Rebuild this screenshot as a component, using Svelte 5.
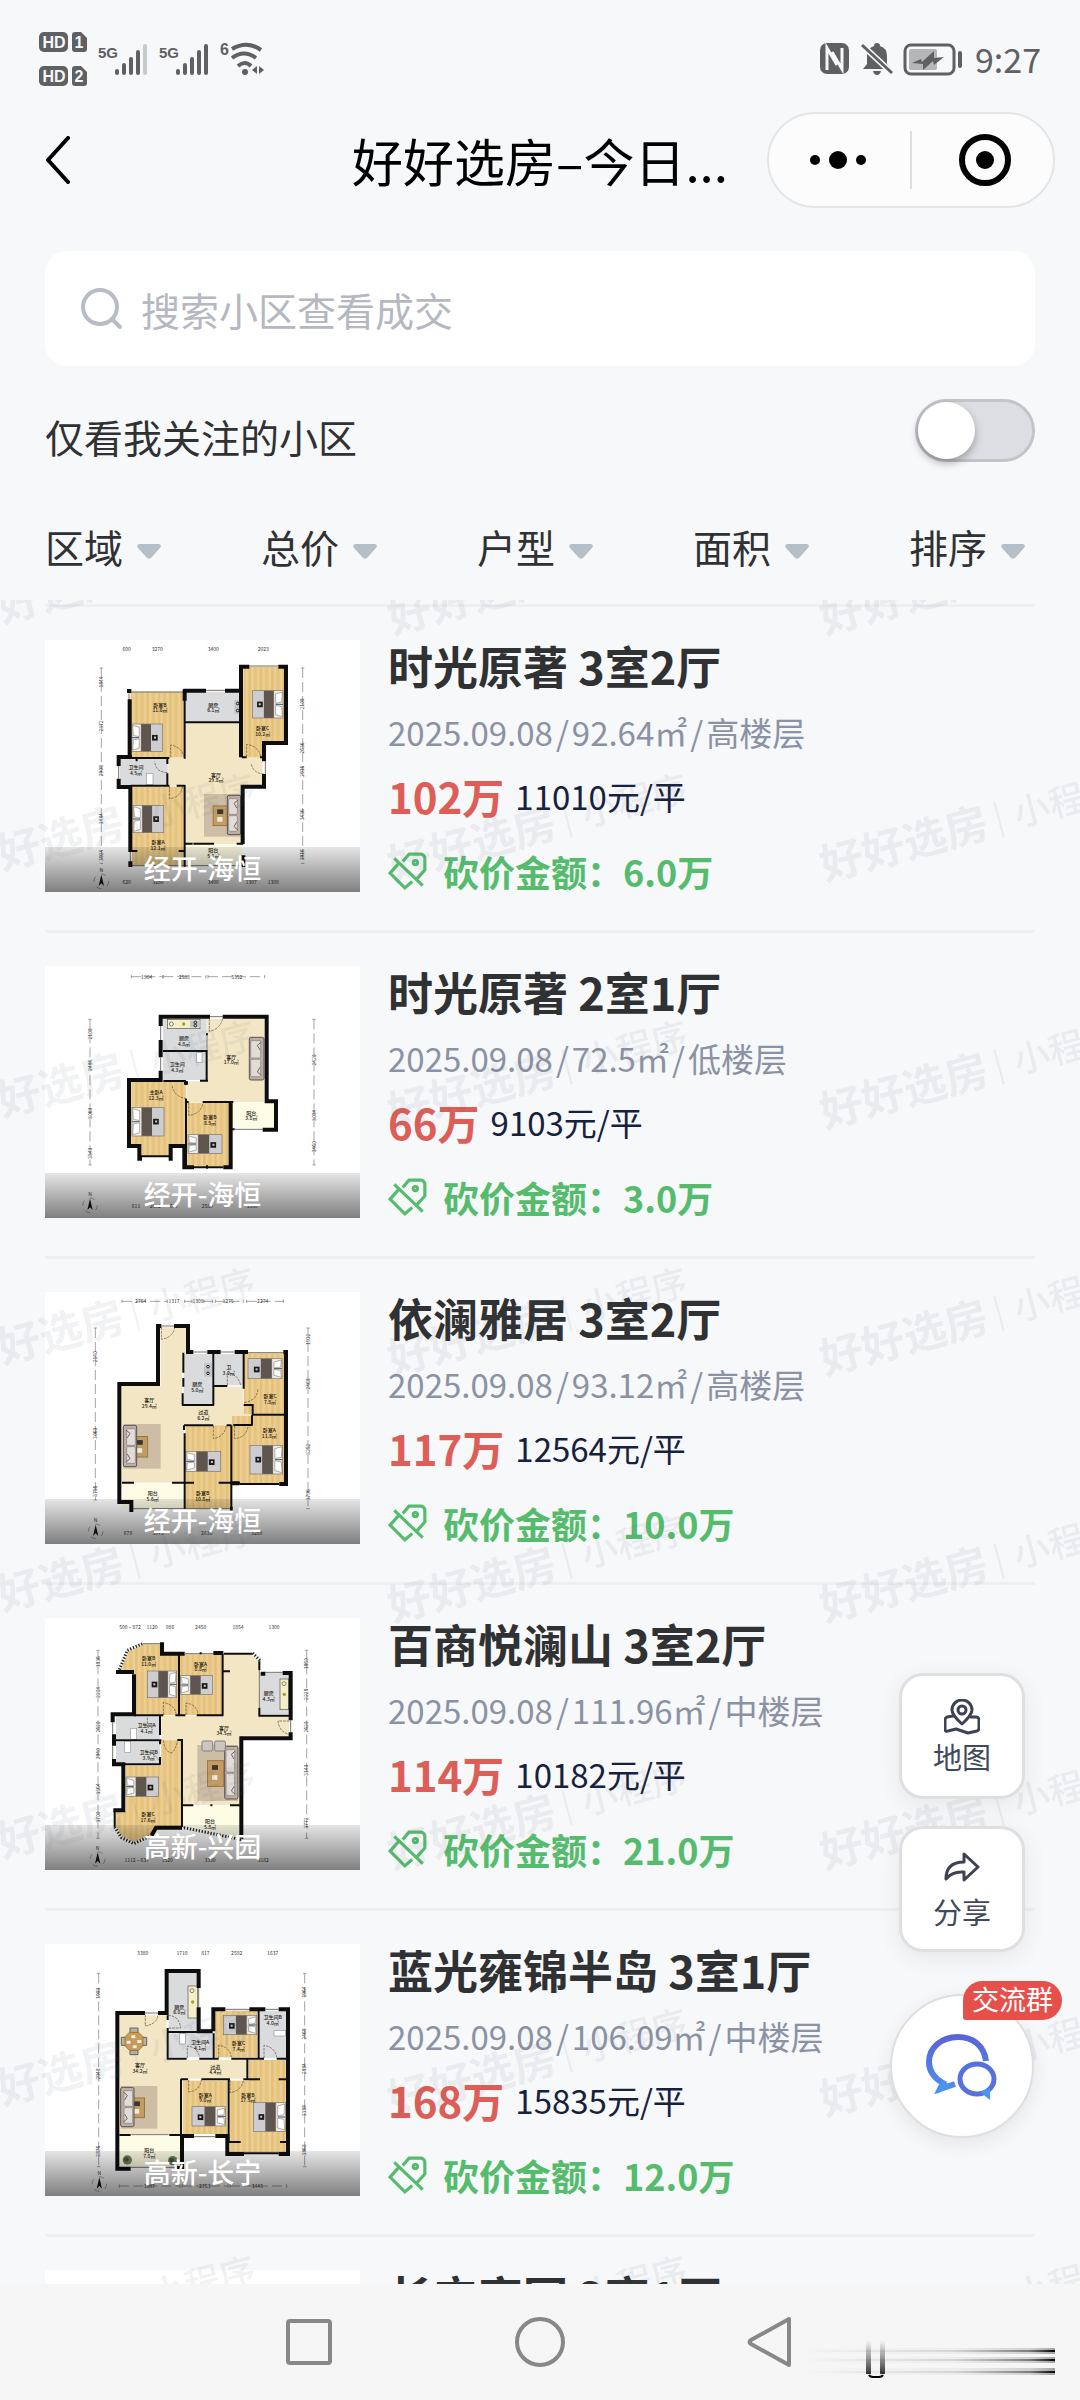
<script>
  const filters = ['区域', '总价', '户型', '面积', '排序'];

  const plans = {
    a: {
      box: '45 60 945 756',
      wood: ['M302 215H463V412H302Z', 'M306 500H463V737H306Z', 'M640 140H765V368H700V412H640Z'],
      cream: ['M467 308H635V412H698V497H635V672H467V497H415V412H467Z'],
      tile: ['M467 215H635V306H467Z', 'M270 416H413V496H270Z'],
      pale: ['M467 675H635V738H467Z'],
      thick: 'M291 213H304M299 238V412M266 438V411H306M266 476V501H306M301 500V696M301 724V741M633 412V140H658M745 140H768V369H702V424M702 462V500H638V672M640 706V741M460 212H528M585 212H638M464 208V242',
      thin: 'M464 212V416M464 496V740M302 414H418M302 497H418M440 497H466M466 307H550M550 307H636M635 215V412M412 416V432M412 460V497M466 671H488M620 671H640M636 412H650M690 412H704M304 693H322M446 693H464M490 671H552M320 415V424',
      glass: 'M304 216H460M528 211H585M658 138H745M304 737H636M297 220V240M266 438V476M706 424V462M301 696V724',
      doors: 'M422 412V375Q452 380 462 408M418 498V536Q450 534 458 500M412 458Q376 456 374 424M650 410V373Q684 378 692 408M702 462Q668 460 664 430',
      beds: [[306, 312, 91, 82, 0], [309, 556, 92, 82, 0], [667, 212, 92, 82, 1]],
      rugs: [[522, 522, 110, 128, 1]],
      stove: [[613, 240, 20, 42]],
      bath: [[349, 460, 20, 34]],
      labels: [[390, 260, '卧室B', '11.6㎡'], [550, 260, '厨房', '6.1㎡'], [698, 330, '卧室C', '10.2㎡'], [318, 448, '卫生间', '4.5㎡'], [558, 470, '客厅', '29.8㎡'], [384, 672, '卧室A', '12.1㎡'], [550, 696, '阳台', '5.1㎡']],
      top: [88, [[290, '600'], [382, '3270'], [550, '3400'], [700, '2023']]],
      bottom: [787, [[290, '620'], [384, '3280'], [550, '3400'], [664, '1307'], [730, '1308']]],
      left: [214, 144, 730, [186, 318, 452, 596, 706]],
      right: [818, 144, 730, [252, 384, 454, 584, 704]],
      compass: [214, 784]
    },
    b: {
      box: '45 48 945 756',
      wood: ['M304 396H468V584H418V618H334V584H304Z', 'M472 458H597V648H472Z'],
      cream: ['M532 206H703V456H470V394H532Z'],
      tile: ['M399 206H530V300H399Z', 'M399 306H530V390H399Z'],
      pale: ['M604 458H732V534H604Z'],
      thick: 'M392 228V200H540M578 200H710V454H738V539H698M392 270V322M392 362V390H297V588H328V626H336M428 626H422V588H466M463 588V652H492M580 652H602V456M468 394V404',
      thin: 'M399 303H532M530 300V392M510 392H534M531 250V256M400 393H468M468 394V404M468 446V650M470 456H476M518 456H610M602 538H614M332 619H420M490 652H580M531 646V656',
      glass: 'M392 228V270M392 322V362M540 200H578M614 538H698M531 256V300',
      doors: 'M538 206V244Q570 238 578 206M470 446Q430 440 426 404M476 458V496Q514 492 518 460',
      beds: [[306, 472, 96, 86, 0], [474, 554, 102, 56, 0]],
      sofas: [[658, 262, 44, 128, 1]],
      stove: [[480, 212, 32, 20]],
      counter: [[412, 208, 98, 28]],
      bath: [[500, 308, 16, 30]],
      labels: [[462, 270, '厨房', '4.8㎡'], [442, 348, '卫生间', '4.3㎡'], [604, 326, '客厅', '17.0㎡'], [378, 432, '主卧A', '12.3㎡'], [540, 508, '卧室B', '8.5㎡'], [664, 494, '阳台', '3.8㎡']],
      top: [80, [[350, '1904'], [463, '2588'], [620, '3352']], [[304, 398], [400, 528], [534, 704]]],
      bottom: [768, [[318, '611'], [376, '2092'], [432, '607'], [532, '2580'], [666, '3350']]],
      left: [180, 208, 645, [252, 346, 490, 610]],
      right: [852, 208, 645, [330, 496, 590]],
      compass: [180, 766]
    },
    c: {
      box: '45 66 945 756',
      wood: ['M642 250H764V432H642Z', 'M606 438H764V640H606Z', 'M467 466H602V716H467Z'],
      cream: ['M392 172H468V250H456V406H550V350H640V406H664V464H462V638H274V348H392Z'],
      tile: ['M461 252H548V402H461Z', 'M554 252H640V346H554Z'],
      pale: ['M276 642H460V716H276Z'],
      thick: 'M394 168H384V342H268V696H304V726M432 168H474V246H490M532 246H572M614 246H654M760 246H768V642H748M628 640H602M600 716H608',
      thin: 'M460 248V308M460 324V350M458 370V406M550 250V406M456 405H552M550 348H592M641 250V356M641 405H668V436M668 434H766M666 436V464M610 465H668M462 466H548M590 466H604M604 466V716M462 466V480M464 490V716M276 638H312M426 638H492M566 638H630M628 642H748M546 466H550',
      glass: 'M490 246H532M572 246H614M654 248H760M304 716H600M394 168H432M628 642H748',
      doors: 'M394 172V208Q430 202 434 172M592 346V308Q624 312 632 346M642 398Q680 392 684 358M550 468V506Q584 500 588 468M614 468V506Q650 502 654 468',
      beds: [[654, 266, 102, 60, 1], [468, 544, 104, 60, 0], [660, 526, 98, 86, 1]],
      rugs: [[280, 462, 112, 134, 0]],
      stove: [[522, 280, 24, 40]],
      labels: [[358, 396, '客厅', '29.4㎡'], [502, 348, '厨房', '5.0㎡'], [596, 298, '卫', '3.2㎡'], [720, 384, '卧室C', '7.8㎡'], [520, 432, '过道', '6.2㎡'], [718, 486, '卧室A', '11.8㎡'], [518, 676, '卧室B', '10.8㎡'], [368, 676, '阳台', '5.6㎡']],
      top: [94, [[332, '2764'], [432, '1317'], [504, '1309'], [594, '1275'], [698, '2274']], [[276, 412], [464, 486], [522, 548], [556, 640], [650, 760]]],
      bottom: [790, [[294, '670'], [384, '3975'], [530, '2610'], [680, '3280']]],
      left: [196, 174, 690, [260, 490, 664]],
      right: [834, 174, 716, [208, 342, 538, 674]],
      compass: [197, 784]
    },
    d: {
      box: '45 53 945 756',
      wood: ['M338 132H396V160H446V344H312V212H268L292 150Z', 'M450 162H576V344H450Z', 'M394 420H454V678H380L366 706L312 728L270 708L256 676V632H288V496H394Z'],
      cream: ['M582 162H668L688 182V346H778V406H634V614H458V420H394V346H582Z'],
      tile: ['M690 218H776V342H690Z', 'M258 348H390V416H258Z', 'M258 424H390V490H258Z'],
      pale: ['M458 618H630V718L458 678Z'],
      thick: 'M396 126V160H464M312 222V342H248V366M258 215H312M550 158H580M692 220H706M758 218H782V360M782 396V414H634V716M252 402V436M252 476V492H280V630H250M364 706L378 682H456',
      thin: 'M447 162V346M578 160V346M580 213H600M312 345H400M436 345H466M500 345H580M582 160H668M688 180V210M688 322V346H780M252 420H394M390 346V404M390 420V432M390 470V492M256 492H392M442 419H456V680M458 615H490M544 612V618M600 615H634M254 632V680M634 412H640M512 156V162',
      glass: 'M338 130H396M464 160H550M248 366V402M248 436V476M706 216H758M782 360V396M688 210V322M458 680L636 720',
      doors: 'M400 344V306Q434 314 438 340M468 344V308Q500 312 504 342M400 420Q404 456 426 458Q440 440 442 422M778 362H744Q748 396 778 402M352 352V380M346 454Q376 456 390 486',
      hatch: 'M268 208L292 150L338 130M254 680L274 712L312 730L364 706M668 158L690 180M462 682L634 718',
      beds: [[352, 212, 88, 80, 1], [452, 226, 96, 56, 0], [288, 530, 98, 58, 0]],
      rugs: [[502, 434, 122, 168, 1]],
      counter: [[750, 236, 26, 92]],
      bath: [[302, 384, 18, 34], [284, 422, 18, 34]],
      chairs: [[516, 422, 32, 30], [554, 422, 32, 30]],
      labels: [[356, 180, '卧室B', '11.0㎡'], [512, 196, '卧室A', '8.8㎡'], [716, 284, '厨房', '4.3㎡'], [350, 380, '卫生间A', '4.1㎡'], [356, 462, '卫生间B', '3.9㎡'], [582, 388, '客厅', '34.5㎡'], [354, 648, '卧室C', '17.6㎡'], [540, 668, '阳台', '5.8㎡']],
      top: [80, [[300, '500·872'], [366, '1120'], [420, '986'], [512, '2450'], [624, '1854'], [732, '1300']]],
      bottom: [778, [[320, '1112·637'], [412, '1520'], [540, '3330'], [700, '3182']]],
      left: [204, 150, 714, [184, 276, 380, 460, 566, 650]],
      right: [830, 150, 714, [190, 282, 380, 510, 668]],
      compass: [203, 776]
    },
    e: {
      box: '45 72 945 756',
      wood: ['M556 272H682V412H556Z', 'M458 482H592V642H458Z', 'M656 420H768V696H600V482H656Z'],
      cream: ['M268 286H410V420H648V476H450V642H268Z'],
      tile: ['M416 158H502V332H416Z', 'M416 340H548V412H416Z', 'M690 272H768V414H690Z'],
      pale: ['M268 648H450V740H268Z'],
      thick: 'M345 279H262V746H302M384 279H410V153H506V204M506 262V334H548M550 334V268H586M658 268H706M746 268H774V702H746M642 702H592V648H556M492 648H456V744H440',
      thin: 'M413 286V300M413 324V416H470M414 336H512M508 416H566M604 416H702M740 416H770M551 340V416M686 272V414M652 418V478M452 478H474M514 478H600M640 478H690M746 478H770M453 478V644M596 480V666H632M750 666H770M268 645H302M418 645H456M642 700H746',
      glass: 'M345 279H384M506 204V262M512 330H548M586 268H658M706 268H746M302 742H440M492 650H556M304 644H416',
      doors: 'M346 284V318Q380 312 384 286M414 286Q448 288 452 324H414M472 414V378Q504 382 508 412M566 414V376Q600 380 604 412M702 414V376Q736 382 740 412M476 480V516Q510 512 514 480M600 480V518Q636 512 640 480',
      beds: [[580, 286, 100, 58, 1], [486, 560, 100, 58, 1], [670, 548, 96, 86, 1]],
      rugs: [[272, 498, 110, 128, 0]],
      counter: [[474, 198, 28, 96]],
      bath: [[448, 340, 18, 32], [732, 332, 34, 16]],
      table: [312, 364],
      plants: [[292, 720], [428, 722]],
      labels: [[448, 266, '厨房', '6.0㎡'], [510, 372, '卫生间A', '4.1㎡'], [626, 376, '卧室C', '7.4㎡'], [728, 298, '卫生间B', '4.0㎡'], [330, 442, '客厅', '34.2㎡'], [556, 446, '过道', '4.4㎡'], [526, 530, '卧室A', '9.0㎡'], [654, 530, '卧室B', '17.5㎡'], [358, 696, '阳台', '7.0㎡']],
      top: [100, [[338, '3380'], [456, '1710'], [526, '817'], [620, '2592'], [728, '1637']]],
      bottom: [798, [[358, '3907'], [524, '2753'], [682, '3443']], [[268, 450], [456, 594], [600, 770]]],
      left: [206, 160, 740, [220, 462, 694]],
      right: [824, 160, 740, [216, 342, 446, 572, 690]],
      compass: [208, 792]
    },
    f: {
      box: '0 0 945 756',
      wood: [], cream: [], tile: [], pale: [], thick: '', thin: '', glass: '', doors: '', beds: [], labels: [],
      top: [50, [[350, '1300'], [430, '2700'], [560, '1600']], [[340, 420], [450, 610]]],
      bottom: [730, []],
      left: [150, 120, 680, []],
      right: [790, 120, 680, []]
    }
  };

  const listings = [
    { plan: 'a', place: '经开-海恒', name: '时光原著 3室2厅', area: '92.64', floor: '高楼层', total: '102万', unit: '11010元/平', cut: '6.0万' },
    { plan: 'b', place: '经开-海恒', name: '时光原著 2室1厅', area: '72.5', floor: '低楼层', total: '66万', unit: '9103元/平', cut: '3.0万' },
    { plan: 'c', place: '经开-海恒', name: '依澜雅居 3室2厅', area: '93.12', floor: '高楼层', total: '117万', unit: '12564元/平', cut: '10.0万' },
    { plan: 'd', place: '高新-兴园', name: '百商悦澜山 3室2厅', area: '111.96', floor: '中楼层', total: '114万', unit: '10182元/平', cut: '21.0万' },
    { plan: 'e', place: '高新-长宁', name: '蓝光雍锦半岛 3室1厅', area: '106.09', floor: '中楼层', total: '168万', unit: '15835元/平', cut: '12.0万' },
    { plan: 'f', place: '', name: '长宁家园 2室1厅' }
  ];
</script>

{#snippet signal(weak)}
  <svg class="signal" viewBox="0 0 50 34" aria-hidden="true">
    <text x="0" y="16" font-size="15" font-weight="700">5G</text>
    <path d="M19 29v2M26 23v8M33 17v14M40 10v21" />
    <path d="M47 4v27" opacity={weak ? 0.3 : 1} />
  </svg>
{/snippet}

{#snippet bed(x, y, w, h, flip)}
  <g transform={flip ? `translate(${x + w} ${y}) scale(-1 1)` : `translate(${x} ${y})`}>
    <rect width={w} height={h} fill="#cfcbc8" />
    <rect width={w * 0.28} height={h} fill="#efece8" />
    <path d="M2 4L{w * 0.24} 10V{h * 0.46}L4 {h * 0.42}ZM2 {h - 4}L{w * 0.24} {h - 10}V{h * 0.54}L4 {h * 0.58}Z" fill="#fff" stroke="#8d857f" stroke-width="2" />
    <path d="M0 {h * 0.5}H{w * 0.24}" stroke="#3b5960" stroke-width="3" />
    <rect x={w * 0.3} width={w * 0.33} height={h} fill="#5e554f" />
    <rect x={w * 0.63} width={w * 0.37} height={h} fill="#cdccd0" />
    <rect x={w * 0.66} y={h * 0.4} width="17" height="17" fill="#1b1a19" />
    <rect x={w * 0.66 + 6} y={h * 0.4 + 5} width="6" height="6" fill="#cfc9c2" />
    <rect width={w} height={h} fill="none" stroke="#7b736c" stroke-width="2" />
  </g>
{/snippet}

{#snippet sofa(x, y, w, h, flip)}
  <g transform={flip ? `translate(${x + w} ${y}) scale(-1 1)` : `translate(${x} ${y})`}>
    <rect width={w} height={h} rx="5" fill="#b9aea8" stroke="#5d5450" stroke-width="3" />
    <rect x="10" y="10" width={w - 14} height={h / 2 - 12} rx="3" fill="#e2dcd9" stroke="#857b76" stroke-width="2" />
    <rect x="10" y={h / 2 + 2} width={w - 14} height={h / 2 - 12} rx="3" fill="#e2dcd9" stroke="#857b76" stroke-width="2" />
    <path d="M8 14l12 10-8 14M8 {h - 14}l12-10-8-14" fill="none" stroke="#6c6460" stroke-width="3" />
  </g>
{/snippet}

{#snippet floorPlan(p)}
  <svg class="plan" viewBox={p.box} aria-hidden="true">
    {#each p.cream as d}<path {d} fill="#f3e6c4" />{/each}
    {#each p.tile as d}<path {d} fill="#d9dbdd" />{/each}
    {#each p.pale as d}<path {d} fill="#fcfce4" />{/each}
    {#each p.wood as d}<path {d} fill="#e6c47f" /><path {d} fill="url(#planks)" />{/each}
    {#each p.rugs ?? [] as [x, y, w, h, flip]}
      <rect {x} {y} width={w} height={h} fill="#cebda5" />
      <rect x={x + w * 0.25} y={y + h * 0.28} width={w * 0.4} height={h * 0.46} fill="#c29c62" stroke="#9a7742" stroke-width="3" />
      <rect x={x + w * 0.36} y={y + h * 0.36} width="18" height="14" fill="#3a352e" />
      <rect x={x + w * 0.36} y={y + h * 0.54} width="16" height="14" fill="#f0ead8" />
      {@render sofa(flip ? x + w - 40 : x, y + 4, 40, h - 10, flip)}
    {/each}
    {#each p.sofas ?? [] as [x, y, w, h, flip]}{@render sofa(x, y, w, h, flip)}{/each}
    {#each p.chairs ?? [] as [x, y, w, h]}<rect {x} {y} width={w} height={h} rx="4" fill="#cbc6c4" stroke="#867f7b" stroke-width="3" />{/each}
    {#each p.beds as [x, y, w, h, flip]}{@render bed(x, y, w, h, flip)}{/each}
    {#each p.counter ?? [] as [x, y, w, h]}
      <rect {x} {y} width={w} height={h} fill="#f4efc6" stroke="#55504a" stroke-width="2" />
      <circle cx={x + w * 0.5} cy={y + h * 0.5} r="5" fill="#9aa12f" />
      <circle cx={x + 12} cy={y + 14} r="6" fill="none" stroke="#555" stroke-width="2" />
    {/each}
    {#each p.stove ?? [] as [x, y, w, h]}
      <rect {x} {y} width={w} height={h} fill="#c2c5c8" />
      <circle cx={x + w / 2} cy={y + h * 0.25} r="4" fill="none" stroke="#222" stroke-width="3" />
      <circle cx={x + w / 2} cy={y + h * 0.75} r="4" fill="none" stroke="#222" stroke-width="3" />
    {/each}
    {#each p.bath ?? [] as [x, y, w, h]}<rect {x} {y} width={w} height={h} fill="#fff" stroke="#999" stroke-width="2" />{/each}
    {#if p.table}
      <g transform="translate({p.table[0]} {p.table[1]})">
        <path d="M-12-40h24v14h-24zM-12 26h24v14h-24zM-38-12h14v24h-14zM24-12h14v24h-14z" fill="#b8b1aa" stroke="#6b625b" stroke-width="3" />
        <path d="M-14-27h28l13 13v28l-13 13h-28l-13-13v-28z" fill="#c79b58" stroke="#8b6a35" stroke-width="2" />
        <path d="M-8-18h12v9h-12zM10-4h12v9h-12zM-22-2h12v9h-12zM-4 12h12v9h-12z" fill="#f3ece0" />
      </g>
    {/if}
    {#each p.plants ?? [] as [x, y]}<circle cx={x} cy={y} r="14" fill="#6d8159" /><circle cx={x - 3} cy={y - 2} r="7" fill="#43582f" />{/each}
    <path d={p.glass} class="glass" />
    <path d={p.doors} class="doors" />
    <path d={p.thick} class="thick" />
    <path d={p.thin} class="thin" />
    {#if p.hatch}<path d={p.hatch} class="hatch-base" /><path d={p.hatch} class="hatch" />{/if}
    {#each p.labels as [x, y, name, size]}
      <text class="room" {x} {y}>{name}</text>
      <text class="room" {x} y={y + 17}>{size}</text>
    {/each}
    {#each [p.top, p.bottom] as [y, marks, lines]}
      {#each lines ?? [] as [x1, x2]}<path d="M{x1} {y}H{x2}M{x1} {y - 5}v10M{x2} {y - 5}v10" class="rule" />{/each}
      {#each marks as [x, t]}<text class="dim" {x} y={y + 6}>{t}</text>{/each}
    {/each}
    {#each [p.left, p.right] as [x, y1, y2, marks]}
      <path d="M{x} {y1}V{y2}M{x - 5} {y1}h10M{x - 5} {y2}h10" class="rule" />
      {#each marks as m}<text class="dim" x="0" y="5" transform="translate({x} {m}) rotate(-90)">{1100 + m * 4}</text>{/each}
    {/each}
    {#if p.compass}
      <g transform="translate({p.compass[0]} {p.compass[1]})">
        <circle r="22" fill="none" stroke="#888" stroke-width="2" stroke-dasharray="16 18" />
        <path d="M0-20L8 14L0 6L-8 14Z" fill="#151515" />
        <text class="dim" x="0" y="-28">N</text>
      </g>
    {/if}
  </svg>
{/snippet}

<svg class="defs" aria-hidden="true">
  <defs>
    <pattern id="planks" width="34" height="60" patternUnits="userSpaceOnUse">
      <path d="M5 0V60M21 0V60" stroke="#eccf92" stroke-width="7" />
      <path d="M13 0V60" stroke="#dfb972" stroke-width="2" />
    </pattern>
  </defs>
</svg>

<div class="app">
  <header>
    <div class="status">
      <div class="status-side">
        <svg class="hd" viewBox="0 0 50 54" aria-hidden="true">
          <rect x="0" y="0" width="29" height="20" rx="5" /><path d="M36 0H42L48 6V17Q48 20 45 20H36Q33 20 33 17V3Q33 0 36 0Z" />
          <rect x="0" y="34" width="29" height="20" rx="5" /><path d="M36 34H42L48 40V51Q48 54 45 54H36Q33 54 33 51V37Q33 34 36 34Z" />
          <g fill="#f7f8fa" font-size="16" font-weight="700" text-anchor="middle">
            <text x="15" y="16">HD</text><text x="40" y="16">1</text>
            <text x="15" y="50">HD</text><text x="40" y="50">2</text>
          </g>
        </svg>
        {@render signal(true)}
        {@render signal(false)}
        <svg class="wifi" viewBox="0 0 46 36" aria-hidden="true">
          <text x="0" y="14" font-size="16" font-weight="700">6</text>
          <path d="M12 8Q27-1 41 9M12 17Q24 8 36 17M18 25Q25 19 31 25" fill="none" stroke="#5f6061" stroke-width="4" />
          <circle cx="25" cy="31" r="3" />
          <path d="M37 25v8l-5-4zM39 33v-8l5 4z" />
        </svg>
      </div>
      <div class="status-side">
        <svg class="nfc" viewBox="0 0 30 32" aria-hidden="true">
          <rect width="29" height="31" y="0" rx="7" />
          <path d="M7 27V5L17 22M12 9L22 26V5" fill="none" stroke="#f7f8fa" stroke-width="3" />
        </svg>
        <svg class="bell" viewBox="0 0 32 32" aria-hidden="true">
          <path d="M16 0q3 0 3 3q7 2 7 10v8l4 5H2l4-5v-8q0-8 7-10q0-3 3-3zM12 28h8q-1 4-4 4t-4-4z" />
          <path d="M1 2L31 30" stroke="#f7f8fa" stroke-width="6" /><path d="M1 2L31 30" stroke="#5f6061" stroke-width="3" />
        </svg>
        <svg class="battery" viewBox="0 0 60 33" aria-hidden="true">
          <rect x="2" y="2" width="49" height="29" rx="6" fill="none" stroke="#5f6061" stroke-width="3" />
          <rect x="6" y="6" width="28" height="21" rx="2" fill="#b5b6b7" />
          <path d="M9 20l9-4 1 3 12-11 0 7 10-1-10 8-1-4-10 9 0-6z" />
          <rect x="55" y="8" width="4" height="17" rx="2" />
        </svg>
        <time>9:27</time>
      </div>
    </div>

    <div class="nav">
      <button class="back" aria-label="返回">
        <svg viewBox="0 0 26 48" aria-hidden="true"><path d="M23 2L3 24L23 46" /></svg>
      </button>
      <h1>好好选房–今日...</h1>
      <div class="capsule">
        <button aria-label="更多">
          <svg viewBox="0 0 60 20" aria-hidden="true"><circle cx="7" cy="10" r="5" /><circle cx="30" cy="10" r="9" /><circle cx="53" cy="10" r="5" /></svg>
        </button>
        <button aria-label="关闭">
          <svg class="ring" viewBox="0 0 54 54" aria-hidden="true"><circle cx="27" cy="27" r="23" fill="none" stroke="#000" stroke-width="6" /><circle cx="27" cy="27" r="9" /></svg>
        </button>
      </div>
    </div>

    <label class="search">
      <svg viewBox="0 0 42 42" aria-hidden="true"><circle cx="19" cy="19" r="17" /><path d="M31 31L39 39" /></svg>
      <input type="search" placeholder="搜索小区查看成交" aria-label="搜索小区查看成交" />
    </label>

    <div class="follow">
      <label for="follow">仅看我关注的小区</label>
      <input id="follow" type="checkbox" role="switch" />
    </div>

    <div class="filters">
      {#each filters as f}
        <label>
          <select aria-label={f}><option>{f}</option></select>
          <svg viewBox="0 0 24 15" aria-hidden="true"><path d="M2 0H22Q25 1 23 4L14 14Q12 15 10 14L1 4Q-1 1 2 0Z" /></svg>
        </label>
      {/each}
    </div>
  </header>

  <main>
    <ul>
      {#each listings as l}
        <li>
          <figure>
            {@render floorPlan(plans[l.plan])}
            {#if l.place}<figcaption>{l.place}</figcaption>{/if}
          </figure>
          <div class="info">
            <h2>{l.name}</h2>
            {#if l.total}
              <p class="meta"><span>2025.09.08</span><span>/</span><span>{l.area}㎡</span><span>/</span><span>{l.floor}</span></p>
              <p class="price"><strong>{l.total}</strong><span>{l.unit}</span></p>
              <p class="cut">
                <svg viewBox="0 0 38 38" aria-hidden="true">
                  <path d="M14 10L20 3L32 3Q35 4 35 7V18L27 27M10 12L2 21L16 35L23 29" />
                  <path d="M6 7L33 33" /><circle cx="26" cy="11" r="2" />
                </svg>
                砍价金额：{l.cut}
              </p>
            {/if}
          </div>
        </li>
      {/each}
    </ul>

    <svg class="watermark" aria-hidden="true">
      <defs>
        <pattern id="mark" x="-49" y="-142" width="432" height="247" patternUnits="userSpaceOnUse">
          <g transform="translate(10 176) rotate(-15)">
            <text x="0" y="0" font-size="43" font-weight="700">好好选房</text>
            <path d="M184-32V4" stroke="#5a6478" stroke-width="2" />
            <text x="200" y="-2" font-size="36" font-weight="500">小程序</text>
          </g>
        </pattern>
      </defs>
      <rect width="100%" height="100%" fill="url(#mark)" />
    </svg>

    <aside>
      <button class="tool">
        <svg viewBox="0 0 36 36" aria-hidden="true">
          <path d="M18 25Q8 16 8 11A10 10 0 0 1 28 11Q28 16 18 25Z" /><circle cx="18" cy="11" r="4" />
          <path d="M9 17L3 18Q1 19 1 21V31Q2 33 4 32L12 30L24 34L33 32Q35 31 35 29V20Q34 18 32 18L27 18" />
        </svg>
        地图
      </button>
      <button class="tool share">
        <svg viewBox="0 0 36 32" aria-hidden="true"><path d="M20 2L34 15L20 28V20Q8 19 2 27Q2 10 20 10Z" /></svg>
        分享
      </button>
      <button class="chat">
        <svg viewBox="0 0 72 68" aria-hidden="true">
          <defs><linearGradient id="blue" x1="0" y1="0" x2="0" y2="68" gradientUnits="userSpaceOnUse"><stop offset="0" stop-color="#5a62d6" /><stop offset="1" stop-color="#4a9af0" /></linearGradient></defs>
          <path d="M60 27C58 11 46 3 32 3C15 3 3 14 3 28C3 37 8 44 17 49L14 55L29 50" fill="none" stroke="url(#blue)" stroke-width="6" />
          <path d="M17 46L11 60L24 52Z" fill="#4a96ee" />
          <ellipse cx="51" cy="45" rx="17" ry="15" fill="none" stroke="#5671de" stroke-width="5" />
          <path d="M54 58L64 66L64 54Z" fill="#4a96ee" />
        </svg>
        <span>交流群</span>
      </button>
    </aside>
  </main>

  <nav class="system">
    <button aria-label="最近任务"><svg viewBox="0 0 54 54" aria-hidden="true"><rect x="6" y="6" width="42" height="42" rx="2" /></svg></button>
    <button aria-label="主屏幕"><svg viewBox="0 0 54 54" aria-hidden="true"><circle cx="27" cy="27" r="23" /></svg></button>
    <button aria-label="后退"><svg viewBox="0 0 54 54" aria-hidden="true"><path d="M45 4V50L7 29Q4 27 7 25Z" /></svg></button>
    <svg class="streaks" viewBox="0 0 256 40" aria-hidden="true">
      <defs>
        <linearGradient id="fade-x"><stop offset="0" stop-color="#777" stop-opacity="0" /><stop offset=".6" stop-color="#777" stop-opacity=".2" /><stop offset=".9" stop-color="#444" stop-opacity=".6" /><stop offset="1" stop-color="#000" /></linearGradient>
        <linearGradient id="fade-y" x1="0" y1="0" x2="0" y2="1"><stop offset="0" stop-color="#333" stop-opacity="0" /><stop offset="1" stop-color="#000" /></linearGradient>
      </defs>
      <path d="M0 8h253v6H0zM0 17h253v6H0zM0 28h253v7H0z" fill="url(#fade-x)" opacity=".35" />
      <path d="M0 10h253v2H0zM0 19h253v2H0zM0 31h253v2H0z" fill="url(#fade-x)" />
      <path d="M64 0h5v34h-5zM78 0h5v34h-5z" fill="url(#fade-y)" opacity=".8" />
      <path d="M67 35q1 2 4 2h6q3 0 4-2" fill="none" stroke="#000" stroke-width="2" />
    </svg>
  </nav>
</div>

<style>
  :global(body) { background: #f7f8fa; }
  .app {
    height: 100vh;
    display: flex;
    flex-direction: column;
    background: #f7f8fa;
    color: #303133;
    font-family: "Noto Sans CJK SC", "Noto Sans", sans-serif;
    overflow: hidden;
  }
  .app *, .app *::before { box-sizing: border-box; }
  button, input, select { font: inherit; color: inherit; border: 0; padding: 0; background: none; }
  h1, h2, p, ul, figure { margin: 0; padding: 0; }
  .defs { position: absolute; width: 0; height: 0; }
  header { flex: none; padding: 0 45px; }

  .status { display: flex; justify-content: space-between; height: 112px; padding-top: 28px; margin: 0 -6px; }
  .status-side { display: flex; align-items: center; height: 62px; fill: #5f6061; }
  .status text { font-family: "Liberation Sans", sans-serif; }
  .hd { width: 50px; height: 54px; margin-right: 9px; }
  .signal { width: 50px; height: 34px; margin-right: 11px; stroke-width: 4; stroke-linecap: round; }
  .signal path { stroke: #5f6061; }
  .wifi { width: 46px; height: 36px; }
  .nfc { width: 30px; height: 32px; margin-right: 11px; }
  .bell { width: 32px; height: 32px; margin-right: 10px; }
  .battery { width: 60px; height: 33px; margin-right: 12px; }
  time { font-size: 34px; color: #5f6061; line-height: 60px; }

  .nav { display: grid; grid-template-columns: 1fr auto 1fr; align-items: center; height: 96px; margin: 0 -20px; }
  .back { width: 26px; height: 48px; margin-left: 20px; }
  .back svg { display: block; fill: none; stroke: #000; stroke-width: 4; stroke-linejoin: round; stroke-linecap: round; }
  h1 { font-size: 51px; font-weight: 400; color: #000; line-height: 72px; white-space: nowrap; }
  .capsule { justify-self: end; display: flex; width: 288px; height: 96px; border: 2px solid #e4e5e7; border-radius: 48px; background: #fcfcfd; align-items: center; }
  .capsule button { flex: 1; height: 58px; display: flex; align-items: center; justify-content: center; padding-right: 4px; }
  .capsule button + button { border-left: 2px solid #dcdddf; padding: 0 0 0 4px; }
  .capsule svg { width: 60px; height: 20px; }
  .capsule .ring { width: 54px; height: 54px; }

  .search { display: flex; align-items: center; height: 115px; margin-top: 43px; padding: 0 36px; gap: 18px; background: #fff; border-radius: 22px; }
  .search svg { width: 42px; height: 42px; fill: none; stroke: #b8bcc4; stroke-width: 4; stroke-linecap: round; }
  .search input { flex: 1; font-size: 39px; outline: 0; }
  .search input::placeholder { color: #b5b8c0; opacity: 1; }

  .follow { display: flex; justify-content: space-between; align-items: flex-end; height: 63px; margin-top: 33px; font-size: 39px; line-height: 52px; }
  .follow input { appearance: none; margin: 0; width: 120px; height: 63px; border: 3px solid #c3c4c8; border-radius: 32px; background: #dddee3; }
  .follow input::before { content: ""; display: block; width: 57px; height: 57px; border-radius: 50%; background: #fff; box-shadow: 0 4px 8px rgba(0, 0, 0, .3); }
  .follow input:checked::before { margin-left: auto; }

  .filters { display: grid; grid-template-columns: repeat(5, 1fr); margin: 34px -45px 0; height: 104px; padding-bottom: 4px; }
  .filters label { display: flex; align-items: center; gap: 13px; padding-left: 45px; }
  .filters select { appearance: none; font-size: 39px; line-height: 56px; outline: 0; }
  .filters svg { width: 24px; height: 15px; fill: #b4bfc7; margin-top: 10px; }

  main { position: relative; flex: 1; min-height: 0; overflow: hidden; }
  ul { list-style: none; padding: 4px 45px 0; }
  li { display: flex; align-items: flex-start; gap: 28px; border-top: 3px solid #edeff1; padding: 33px 0 38px; }
  figure { position: relative; flex: none; width: 315px; height: 252px; background: #fff; overflow: hidden; }
  figcaption { position: absolute; inset: auto 0 0; height: 45px; line-height: 42px; font-size: 27px; font-weight: 500; text-align: center; color: #fff; background: linear-gradient(rgba(0, 0, 0, .1), rgba(0, 0, 0, .5)); }
  .plan { display: block; width: 100%; height: 100%; }
  .thick { fill: none; stroke: #0d0d0d; stroke-width: 12; }
  .thin { fill: none; stroke: #0d0d0d; stroke-width: 6; }
  .glass { fill: none; stroke: #77736a; stroke-width: 3; }
  .doors { fill: none; stroke: #5d4c2d; stroke-width: 2; stroke-dasharray: 8 3; }
  .hatch-base { fill: none; stroke: #fff; stroke-width: 9; }
  .hatch { fill: none; stroke: #222; stroke-width: 9; stroke-dasharray: 4 5; }
  .room { font-size: 15px; font-weight: 500; fill: #1e1a12; text-anchor: middle; }
  .dim { font-size: 15px; fill: #333; text-anchor: middle; }
  .rule { stroke: #777; stroke-width: 2; stroke-dasharray: 30 12; fill: none; }

  .info { flex: 1; min-width: 0; height: 252px; white-space: nowrap; }
  h2 { font-size: 45px; line-height: 52px; font-weight: 700; }
  .meta { display: flex; gap: 3px; margin-top: 18px; font-size: 33px; line-height: 44px; color: #8b92a3; }
  .price { display: flex; align-items: center; gap: 11px; margin-top: 16px; line-height: 52px; }
  .price strong { font-size: 42px; font-weight: 700; color: #dd5e57; }
  .price span { font-size: 33px; color: #16213d; }
  .cut { display: flex; align-items: center; gap: 15px; margin-top: 27px; font-size: 36px; line-height: 44px; font-weight: 700; color: #55bc6d; }
  .cut svg { width: 40px; height: 40px; fill: none; stroke: #55bc6d; stroke-width: 3; }

  .watermark { position: absolute; inset: 0; width: 100%; height: 100%; pointer-events: none; opacity: .08; fill: #5a6478; }

  aside { position: absolute; right: 46px; bottom: 146px; display: flex; flex-direction: column; align-items: center; }
  .tool { width: 126px; height: 126px; margin-bottom: 27px; display: flex; flex-direction: column; align-items: center; padding-top: 23px; background: #fff; border: 3px solid #dfdfe2; border-radius: 24px; box-shadow: 0 6px 24px rgba(0, 0, 0, .07); font-size: 29px; line-height: 42px; color: #42495a; }
  .tool svg { width: 36px; height: 36px; fill: none; stroke: #3d4352; stroke-width: 3; stroke-linejoin: round; stroke-linecap: round; }
  .share svg { height: 32px; margin-bottom: 6px; }
  .chat { position: relative; width: 144px; height: 144px; margin-top: 15px; border-radius: 50%; background: #fff; border: 2px solid #dfdfe2; box-shadow: 0 6px 20px rgba(0, 0, 0, .08); display: flex; align-items: center; justify-content: center; }
  .chat svg { width: 72px; height: 68px; margin-top: 4px; }
  .chat span { position: absolute; top: -15px; right: -30px; height: 39px; padding: 0 9px; line-height: 36px; font-size: 27px; color: #fff; background: #e5504b; border-radius: 20px 20px 20px 3px; white-space: nowrap; }

  .system { position: relative; flex: none; display: flex; justify-content: center; align-items: center; gap: 177px; height: 116px; background: #f6f6f6; }
  .system button { width: 54px; height: 54px; }
  .system button svg { display: block; fill: none; stroke: #888; stroke-width: 4; stroke-linejoin: round; }
  .streaks { position: absolute; right: 22px; bottom: 20px; width: 256px; height: 40px; }
</style>
